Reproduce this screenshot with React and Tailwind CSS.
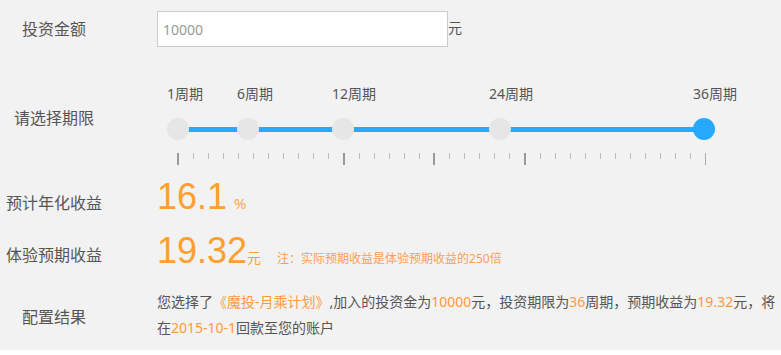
import React from 'react';

const periods = [
  { label: '1周期', left: 'left-[0px]', active: false },
  { label: '6周期', left: 'left-[70px]', active: false },
  { label: '12周期', left: 'left-[165px]', active: false },
  { label: '24周期', left: 'left-[322px]', active: false },
  { label: '36周期', left: 'left-[526px]', active: true },
];

const majorTicks = [0, 11, 17, 23];

const Label = ({ children, className = '' }) => (
  <div className={`w-[108px] shrink-0 text-center text-[16px] leading-[24px] text-[#555] ${className}`}>
    {children}
  </div>
);

const PeriodSlider = () => (
  <div className="ml-[59px] w-[548px]">
    {/* marks above the track */}
    <div className="relative h-[20px]">
      {periods.map(p => (
        <span key={p.label} className={`absolute top-0 ${p.left} text-[14px] leading-[20px] text-[#555] whitespace-nowrap`}>
          {p.label}
        </span>
      ))}
    </div>

    {/* track and handles */}
    <div className="relative mt-[14px] h-[22px]">
      <div className="absolute left-[11px] right-[11px] top-[9px] h-[5px] bg-[#26a9ff]" />
      {periods.map(p => (
        <div
          key={p.label}
          className={`absolute top-0 ${p.left} w-[22px] h-[22px] rounded-full ${p.active ? 'bg-[#26a9ff]' : 'bg-[#e6e6e6]'}`}
        />
      ))}
    </div>

    {/* scale */}
    <div className="mt-[13px] ml-[10px] w-[529px] h-[12px] flex justify-between items-start">
      {Array.from({ length: 36 }).map((_, i) => {
        if (majorTicks.includes(i)) {
          return <div key={i} className="w-[2px] h-[12px] bg-[#999]" />;
        }
        if (i === 35) {
          return <div key={i} className="w-[1px] h-[12px] bg-[#aaa]" />;
        }
        return <div key={i} className="w-[1px] h-[6px] bg-[#bbb]" />;
      })}
    </div>
  </div>
);

const Hi = ({ children }) => <span className="text-[#ff9a3c]">{children}</span>;

export default function App() {
  return (
    <div className="min-h-screen bg-white font-['Noto_Sans','Noto_Sans_CJK_SC',sans-serif]">
      <div className="h-[350px] bg-[#f2f2f2] pt-[11px]">
        {/* 投资金额 */}
        <div className="flex items-center h-[36px]">
          <Label>投资金额</Label>
          <div className="ml-[49px] flex items-center">
            <input
              type="text"
              placeholder="10000"
              className="w-[291px] h-[36px] border border-[#ccc] bg-white px-[5px] text-[14px] text-[#555] placeholder:text-[#999] outline-none"
            />
            <span className="text-[14px] text-[#555] leading-[20px] -mt-[2px]">元</span>
          </div>
        </div>

        {/* 请选择期限 */}
        <div className="flex items-start mt-[37px]">
          <Label className="mt-[22px]">请选择期限</Label>
          <PeriodSlider />
        </div>

        {/* 预计年化收益 */}
        <div className="flex items-start mt-[14px]">
          <Label className="mt-[12px]">预计年化收益</Label>
          <div className="ml-[49px] flex items-baseline text-[#ff9f2f]">
            <span className="font-['Liberation_Sans',sans-serif] text-[36px] leading-[36px]">16.1</span>
            <span className="ml-[7px] text-[15px] text-[#ffa64d]">%</span>
          </div>
        </div>

        {/* 体验预期收益 */}
        <div className="flex items-start mt-[18px]">
          <Label className="mt-[10px]">体验预期收益</Label>
          <div className="ml-[49px] flex items-baseline text-[#ff9f2f]">
            <span className="font-['Liberation_Sans',sans-serif] text-[36px] leading-[36px]">19.32</span>
            <span className="text-[14px]">元</span>
            <span className="ml-[16px] text-[12px] text-[#ff9d55]">注：实际预期收益是体验预期收益的250倍</span>
          </div>
        </div>

        {/* 配置结果 */}
        <div className="flex items-start mt-[20px]">
          <Label className="mt-[16px]">配置结果</Label>
          <p className="ml-[49px] w-[622px] text-[14px] leading-[26px] text-[#555]">
            您选择了<Hi>《魔投-月乘计划》</Hi>,加入的投资金为<Hi>10000</Hi>元，投资期限为<Hi>36</Hi>周期，预期收益为<Hi>19.32</Hi>元，将在<Hi>2015-10-1</Hi>回款至您的账户
          </p>
        </div>
      </div>
    </div>
  );
}
